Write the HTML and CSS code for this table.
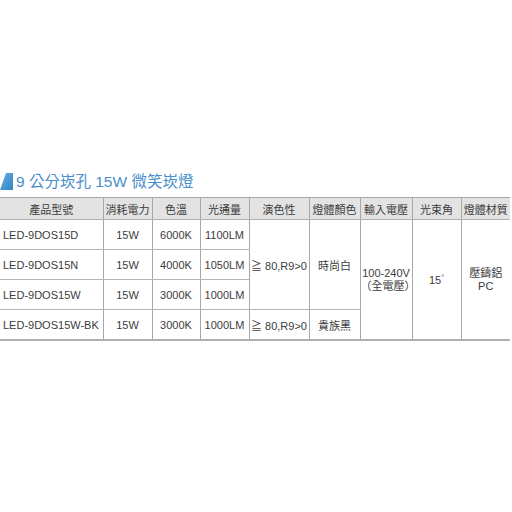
FILE: index.html
```html
<!DOCTYPE html>
<html>
<head>
<meta charset="utf-8">
<link rel="stylesheet" href="styles.css">
</head>
<body>
<div class="page">
  <div class="title">
    <svg class="mark" width="13" height="17" viewBox="0 0 13 17">
      <defs>
        <linearGradient id="g" x1="0" y1="0" x2="1" y2="1">
          <stop offset="0" stop-color="#6aaee0"/>
          <stop offset="1" stop-color="#2f84c8"/>
        </linearGradient>
      </defs>
      <polygon points="6,0 13,0 13,17 0,17" fill="url(#g)"/>
    </svg>
    <span class="title-text">9 公分崁孔 15W 微笑崁燈</span>
  </div>
  <table class="spec">
    <colgroup>
      <col style="width:103px"><col style="width:49px"><col style="width:48px"><col style="width:49px"><col style="width:60px"><col style="width:51px"><col style="width:52px"><col style="width:49px"><col style="width:49px">
    </colgroup>
    <thead>
      <tr>
        <th>產品型號</th><th>消耗電力</th><th>色溫</th><th>光通量</th><th>演色性</th><th>燈體顏色</th><th>輸入電壓</th><th>光束角</th><th>燈體材質</th>
      </tr>
    </thead>
    <tbody>
      <tr>
        <td class="model">LED-9DOS15D</td><td>15W</td><td>6000K</td><td>1100LM</td>
        <td rowspan="3">≧ 80,R9&gt;0</td><td rowspan="3">時尚白</td>
        <td rowspan="4" class="multi">100-240V<br>（全電壓）</td>
        <td rowspan="4">15<sup>°</sup></td>
        <td rowspan="4" class="multi">壓鑄鋁<br>PC</td>
      </tr>
      <tr>
        <td class="model">LED-9DOS15N</td><td>15W</td><td>4000K</td><td>1050LM</td>
      </tr>
      <tr>
        <td class="model">LED-9DOS15W</td><td>15W</td><td>3000K</td><td>1000LM</td>
      </tr>
      <tr>
        <td class="model">LED-9DOS15W-BK</td><td>15W</td><td>3000K</td><td>1000LM</td>
        <td>≧ 80,R9&gt;0</td><td>貴族黑</td>
      </tr>
    </tbody>
  </table>
</div>
</body>
</html>
```
FILE: styles.css
```css
html, body {
  margin: 0;
  padding: 0;
  background: #ffffff;
}
body {
  font-family: "Liberation Sans", "Noto Sans CJK TC", sans-serif;
  color: #3c3c3c;
}
.page {
  padding-top: 172px;
}
.title {
  display: flex;
  align-items: flex-end;
  height: 18px;
  margin-bottom: 7px;
}
.mark {
  display: block;
  flex: none;
}
.title-text {
  margin-left: 3px;
  font-size: 15.5px;
  line-height: 17px;
  color: #4a8fcb;
  white-space: nowrap;
}
.spec {
  border-collapse: collapse;
  table-layout: fixed;
  width: 510px;
  font-size: 11px;
  color: #3c3c3c;
}
.spec th {
  background: #e3e3e3;
  font-weight: normal;
  font-size: 11px;
  height: 21px;
  padding: 0;
  border-top: 1px solid #a8a8a8;
  border-bottom: 1px solid #b0b0b0;
  border-left: 1px solid #a8a8a8;
  text-align: center;
  white-space: nowrap;
}
.spec th:first-child,
.spec td:first-child {
  border-left: none;
}
.spec td {
  height: 29px;
  padding: 0;
  text-align: center;
  border-left: 1px solid #a8a8a8;
  border-bottom: 1px solid #b4b4b4;
  white-space: nowrap;
}
.spec tbody tr:last-child td,
.spec td[rowspan="4"] {
  border-bottom: 2px solid #b0b0b0;
}
.spec td.model {
  text-align: left;
  padding-left: 3px;
}
.spec td.multi {
  line-height: 13px;
}
.spec sup {
  font-size: 7px;
  vertical-align: 4px;
}
```
